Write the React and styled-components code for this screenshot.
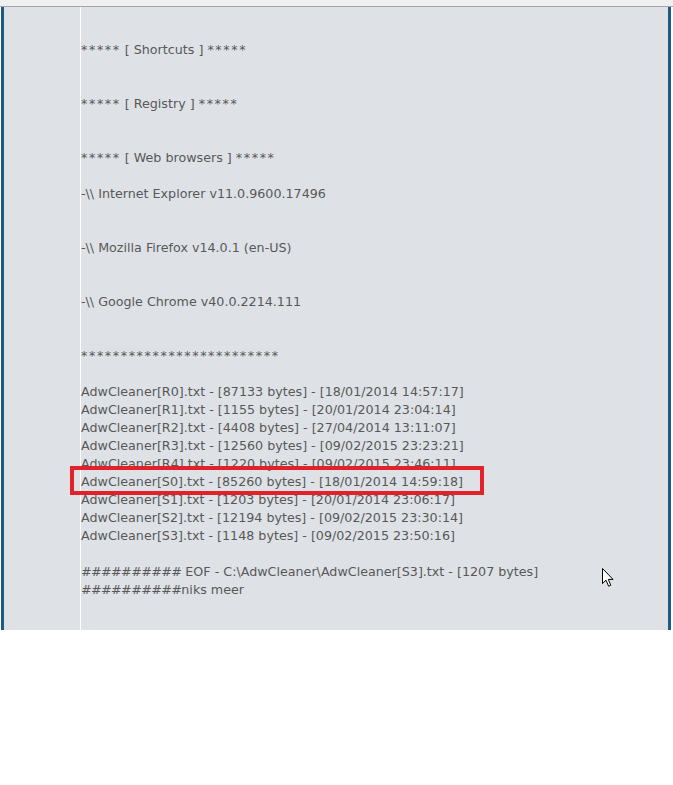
import styled, { createGlobalStyle } from "styled-components";

const GlobalStyle = createGlobalStyle`
  html, body {
    margin: 0;
    padding: 0;
    background: #ffffff;
  }
`;

// each entry is a list of [kind, text] runs; empty list = blank line
const lines = [
  [["stars", "*****"], ["text", " [ Shortcuts ] "], ["stars", "*****"]],
  [],
  [],
  [["stars", "*****"], ["text", " [ Registry ] "], ["stars", "*****"]],
  [],
  [],
  [["stars", "*****"], ["text", " [ Web browsers ] "], ["stars", "*****"]],
  [],
  [["text", "-\\\\ Internet Explorer v11.0.9600.17496"]],
  [],
  [],
  [["text", "-\\\\ Mozilla Firefox v14.0.1 (en-US)"]],
  [],
  [],
  [["text", "-\\\\ Google Chrome v40.0.2214.111"]],
  [],
  [],
  [["stars", "*************************"]],
  [],
  [["text", "AdwCleaner[R0].txt - [87133 bytes] - [18/01/2014 14:57:17]"]],
  [["text", "AdwCleaner[R1].txt - [1155 bytes] - [20/01/2014 23:04:14]"]],
  [["text", "AdwCleaner[R2].txt - [4408 bytes] - [27/04/2014 13:11:07]"]],
  [["text", "AdwCleaner[R3].txt - [12560 bytes] - [09/02/2015 23:23:21]"]],
  [["text", "AdwCleaner[R4].txt - [1220 bytes] - [09/02/2015 23:46:11]"]],
  [["text", "AdwCleaner[S0].txt - [85260 bytes] - [18/01/2014 14:59:18]"]],
  [["text", "AdwCleaner[S1].txt - [1203 bytes] - [20/01/2014 23:06:17]"]],
  [["text", "AdwCleaner[S2].txt - [12194 bytes] - [09/02/2015 23:30:14]"]],
  [["text", "AdwCleaner[S3].txt - [1148 bytes] - [09/02/2015 23:50:16]"]],
  [],
  [["hash", "##########"], ["text", " EOF - C:\\AdwCleaner\\AdwCleaner[S3].txt - [1207 bytes]"]],
  [["hash", "##########"], ["text", "niks meer"]],
];

const MARKED = 24;

function Run({ kind, children }) {
  if (kind === "stars") return <Stars>{children}</Stars>;
  if (kind === "hash") return <Hashes>{children}</Hashes>;
  return <span>{children}</span>;
}

export default function App() {
  return (
    <Page>
      <GlobalStyle />
      <TopStrip />
      <Panel>
        <Gutter />
        <Post>
          {lines.map((runs, i) => (
            <Line key={i} marked={i === MARKED}>
              {runs.length === 0
                ? "\u00a0"
                : runs.map(([kind, text], j) => (
                    <Run key={j} kind={kind}>
                      {text}
                    </Run>
                  ))}
              {i === MARKED && <Marker />}
            </Line>
          ))}
        </Post>
      </Panel>
      <Cursor viewBox="0 0 12 19" width="12" height="19">
        <path
          d="M0.5 0.5 L0.5 15.5 L4 12.2 L6.6 18.2 L8.8 17.2 L6.3 11.4 L11 11.4 Z"
          fill="#ffffff"
          stroke="#000000"
          strokeWidth="1"
        />
      </Cursor>
    </Page>
  );
}

const Page = styled.div`
  position: relative;
  width: 673px;
  height: 785px;
  background: #ffffff;
`;

const TopStrip = styled.div`
  height: 6px;
  background: #f0f0f0;
  border-bottom: 1px solid #a3a7aa;
`;

const Panel = styled.div`
  display: flex;
  margin-left: 1px;
  width: 670px;
  height: 623px;
  box-sizing: border-box;
  background: #dee2e6;
  border-left: 3px solid #1d5b86;
  border-right: 3px solid #1d5b86;
`;

const Gutter = styled.div`
  width: 76px;
  flex-shrink: 0;
  border-right: 1px solid #ffffff;
`;

const Post = styled.div`
  flex: 1;
  padding: 34px 0 0 0;
  font-family: "DejaVu Sans", Verdana, sans-serif;
  font-size: 12.7px;
  line-height: 18px;
  color: #585858;
`;

const Line = styled.div`
  position: ${({ marked }) => (marked ? "relative" : "static")};
  white-space: pre;
  height: 18px;
`;

const Stars = styled.span`
  letter-spacing: 1.6px;
`;

const Hashes = styled.span`
  letter-spacing: -0.6px;
`;

const Marker = styled.span`
  position: absolute;
  left: -11px;
  top: -7px;
  width: 414px;
  height: 29px;
  box-sizing: border-box;
  border: 4px solid #e3212b;
`;

const Cursor = styled.svg`
  position: absolute;
  left: 602px;
  top: 568px;
`;
